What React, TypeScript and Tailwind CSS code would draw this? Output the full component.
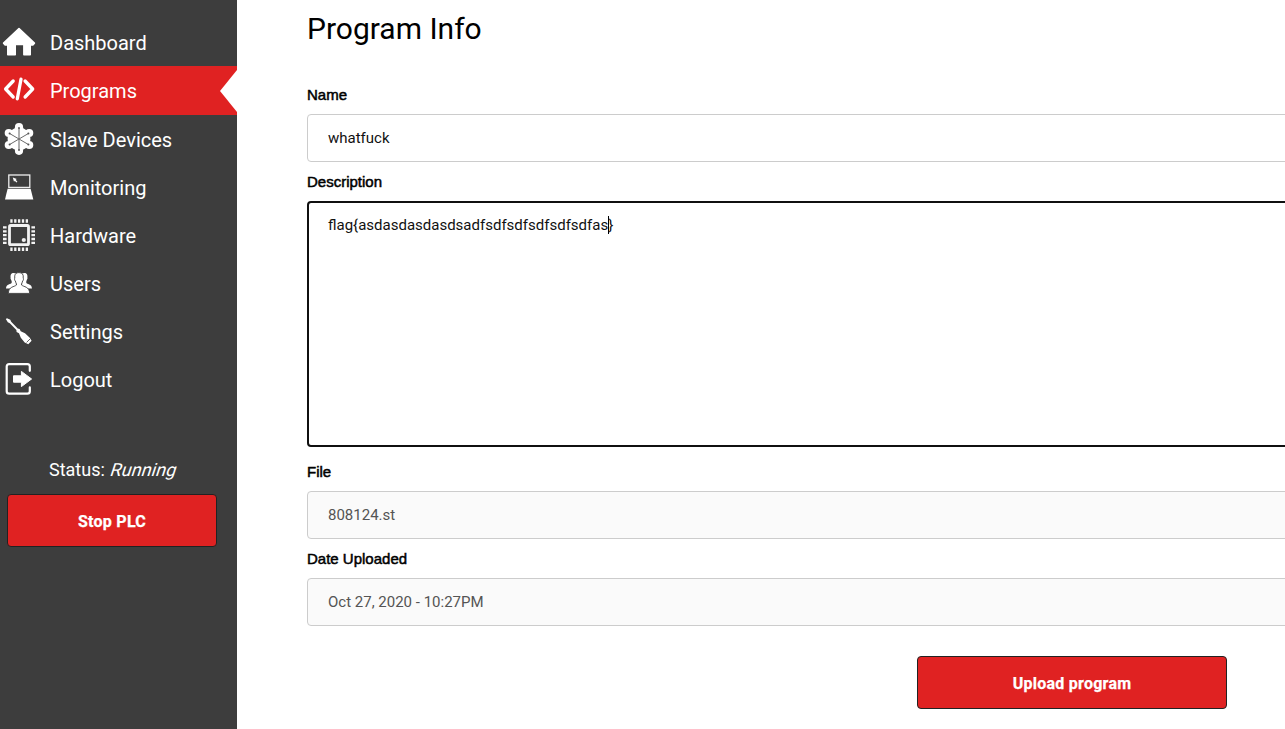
import type { ReactNode } from 'react';

const HomeIcon = () => (
  <path
    fill="#fff"
    stroke="#fff"
    strokeWidth="1.6"
    strokeLinejoin="round"
    d="M19 10.6 34.4 25.2 32.8 27H30.2V36.7H23.9V26.4H15.2V36.7H7.8V27H5.2L3.6 25.2Z"
  />
);

const CodeIcon = () => (
  <g fill="none" stroke="#fff" strokeWidth="3.3" strokeLinecap="round" strokeLinejoin="round">
    <path d="M13.2 15 5.6 23 13.2 31M21 13.2 17.3 32.8M25.1 15 32.7 23 25.1 31" />
  </g>
);

const SlaveIcon = () => (
  <>
    <g fill="#fff">
      <circle cx="19" cy="24" r="11.4" />
      <circle cx="19" cy="12.2" r="4.1" />
      <circle cx="19" cy="35.8" r="4.1" />
      <circle cx="8.8" cy="18" r="4.1" />
      <circle cx="29.2" cy="18" r="4.1" />
      <circle cx="8.8" cy="30" r="4.1" />
      <circle cx="29.2" cy="30" r="4.1" />
    </g>
    <path d="M19 13V35" stroke="#b0b0b0" strokeWidth="2" />
    <path d="M9.6 18.5 28.4 29.5M28.4 18.5 9.6 29.5" stroke="#6a6a6a" strokeWidth="1" />
    <g fill="#555">
      <circle cx="19" cy="13" r=".9" />
      <circle cx="19" cy="35" r=".9" />
      <circle cx="9.6" cy="18.5" r="1" />
      <circle cx="28.4" cy="18.5" r="1" />
      <circle cx="9.6" cy="29.5" r="1" />
      <circle cx="28.4" cy="29.5" r="1" />
    </g>
  </>
);

const LaptopIcon = () => (
  <>
    <rect x="8.8" y="12" width="21" height="12.4" fill="none" stroke="#eee" strokeWidth="1.3" />
    <path fill="#fff" d="M7.6 25.7H30.6L33.3 36.5H5Z" />
    <path fill="#fff" d="M12.8 14.6 16.8 16 15.7 16.8 17.4 18.7 16.4 19.6 14.8 17.7 14 18.8Z" />
  </>
);

const ChipIcon = () => (
  <g fill="none" stroke="#f2f2f2">
    <rect x="9.5" y="14.5" width="19" height="19.2" rx="1.2" strokeWidth="2.8" />
    <path strokeWidth="3.6" strokeDasharray="2.3 1.55" d="M10.3 10H28.3M10.3 38.3H28.3M4.8 15.3V33.3M33.2 15.3V33.3" />
    <circle cx="23.8" cy="29" r="2.1" fill="#eee" stroke="none" />
  </g>
);

const UsersIcon = () => (
  <>
    <g fill="#fff">
      <path d="M13.8 14C11 14 10.3 16 10.6 18.6 10.3 19.6 10.8 20.4 11.4 21.4 12 23 12 24 10.6 24.8 8 25.8 6.2 26.2 6 29.6H16V14.6Z" />
      <path d="M24.2 14C27 14 27.7 16 27.4 18.6 27.7 19.6 27.2 20.4 26.6 21.4 26 23 26 24 27.4 24.8 30 25.8 31.8 26.2 32 29.6H22V14.6Z" />
    </g>
    <path
      fill="#fff"
      stroke="#3d3d3d"
      strokeWidth=".9"
      d="M19 13.6C15.6 13.6 14.3 15.7 14.8 19.1 14.2 19.8 14.6 21.4 15.4 22 15.7 23.8 16.6 24.5 16.4 26 14.5 28 8.5 27.3 8.3 34.4H29.7C29.5 27.3 23.5 28 21.6 26 21.4 24.5 22.3 23.8 22.6 22 23.4 21.4 23.8 19.8 23.2 19.1 23.7 15.7 22.4 13.6 19 13.6Z"
    />
  </>
);

const ScrewdriverIcon = () => (
  <>
    <path fill="#fff" d="M5.8 12 7 11.2 10.3 12.8 11.2 14.8 17.7 21.6 19.6 21.9 20.7 24.2 25 26.2 29.8 30.7 31.6 33.8 28.3 37.2 24.7 35.6 20.8 30.8 19 26.3 16.6 24.9 16.4 23 9.8 16.2 7.8 15.3Z" />
    <path d="M26.6 35.4 30 32" stroke="#555" strokeWidth=".9" />
  </>
);

const LogoutIcon = () => (
  <>
    <path
      fill="none"
      stroke="#fff"
      strokeWidth="2.2"
      strokeLinecap="round"
      d="M29.8 15.8V11.5Q29.8 9.1 27.4 9.1H9.2Q6.7 9.1 6.7 11.6V36.2Q6.7 38.7 9.2 38.7H27.4Q29.8 38.7 29.8 36.3V32.4"
    />
    <path fill="#fff" stroke="#fff" strokeWidth="1" strokeLinejoin="round" d="M13.5 20.8H21.4V16.4L31.6 24 21.4 31.6V27.2H13.5Z" />
  </>
);

const items: { label: string; icon: ReactNode }[] = [
  { label: 'Dashboard', icon: <HomeIcon /> },
  { label: 'Programs', icon: <CodeIcon /> },
  { label: 'Slave Devices', icon: <SlaveIcon /> },
  { label: 'Monitoring', icon: <LaptopIcon /> },
  { label: 'Hardware', icon: <ChipIcon /> },
  { label: 'Users', icon: <UsersIcon /> },
  { label: 'Settings', icon: <ScrewdriverIcon /> },
  { label: 'Logout', icon: <LogoutIcon /> },
];

function NavItem({ label, icon, active }: { label: string; icon: ReactNode; active: boolean }) {
  return (
    <a className={active ? 'flex h-[49px] items-start justify-between bg-[#e02222]' : 'flex h-12 items-start justify-between'}>
      <span className="flex">
        <svg className="h-12 w-10 shrink-0" viewBox="0 0 40 48">
          {icon}
        </svg>
        <span className="pl-[10px] pt-px text-[20px] leading-[48px] text-white">{label}</span>
      </span>
      {active && (
        <svg className="mt-[3px] h-[44px] w-[17px]" viewBox="0 0 17 44">
          <path d="M17 1V43L0 22Z" fill="#fff" />
        </svg>
      )}
    </a>
  );
}

function Label({ children }: { children: string }) {
  return (
    <label className="block h-[17px] font-['Liberation_Sans',sans-serif] text-[15px] leading-[17px] text-black [-webkit-text-stroke:0.5px_black]">
      {children}
    </label>
  );
}

const buttonClass =
  'block rounded-[4px] border border-[#222] bg-[#e02222] pt-[3px] text-center text-[16px] leading-5 font-bold tracking-[0.25px] text-white [-webkit-text-stroke:0.25px_white]';

export default function App() {
  return (
    <div className="flex h-[729px] w-full overflow-hidden bg-white font-[Roboto,sans-serif]">
      <aside className="w-[237px] shrink-0 bg-[#3d3d3d] pt-[18px]">
        <nav>
          {items.map((item) => (
            <NavItem key={item.label} label={item.label} icon={item.icon} active={item.label === 'Programs'} />
          ))}
        </nav>
        <p className="mt-[55px] pl-[49px] text-[18px] leading-6 text-white">
          Status: <em className="ml-[2px] inline-block -skew-x-[18deg] not-italic tracking-[0.1px]">Running</em>
        </p>
        <button className={`${buttonClass} ml-[7px] mt-[12px] h-[53px] w-[210px]`}>Stop PLC</button>
      </aside>
      <main className="w-[1048px] shrink-0 overflow-hidden pl-[70px]">
        <h1 className="mt-[10px] h-[38px] text-[30px] leading-[38px] text-black">Program Info</h1>
        <form className="mt-[38px] w-[1530px] text-[15px]">
          <Label>Name</Label>
          <div className="mt-[11px] flex h-12 items-center rounded-[4px] border border-[#ccc] px-5 text-[#111]">whatfuck</div>
          <div className="mt-[11px]">
            <Label>Description</Label>
          </div>
          <div className="mt-[11px] h-[246px] rounded-[4px] border-2 border-[#101010] px-[19px] pt-[12px] leading-5 text-[#111]">
            flag&#123;asdasdasdasdsadfsdfsdfsdfsdfsdfas
            <span className="relative">
              <span className="absolute left-0 top-0 h-[18px] w-px bg-black" />
              &#125;
            </span>
          </div>
          <div className="mt-[16px]">
            <Label>File</Label>
          </div>
          <div className="mt-[11px] flex h-12 items-center rounded-[4px] border border-[#ccc] bg-[#fafafa] px-5 text-[#545454]">808124.st</div>
          <div className="mt-[11px]">
            <Label>Date Uploaded</Label>
          </div>
          <div className="mt-[11px] flex h-12 items-center rounded-[4px] border border-[#ccc] bg-[#fafafa] px-5 text-[#545454]">
            Oct 27, 2020 - 10:27PM
          </div>
          <button type="button" className={`${buttonClass} mx-auto mt-[30px] h-[53px] w-[310px]`}>
            Upload program
          </button>
        </form>
      </main>
    </div>
  );
}
